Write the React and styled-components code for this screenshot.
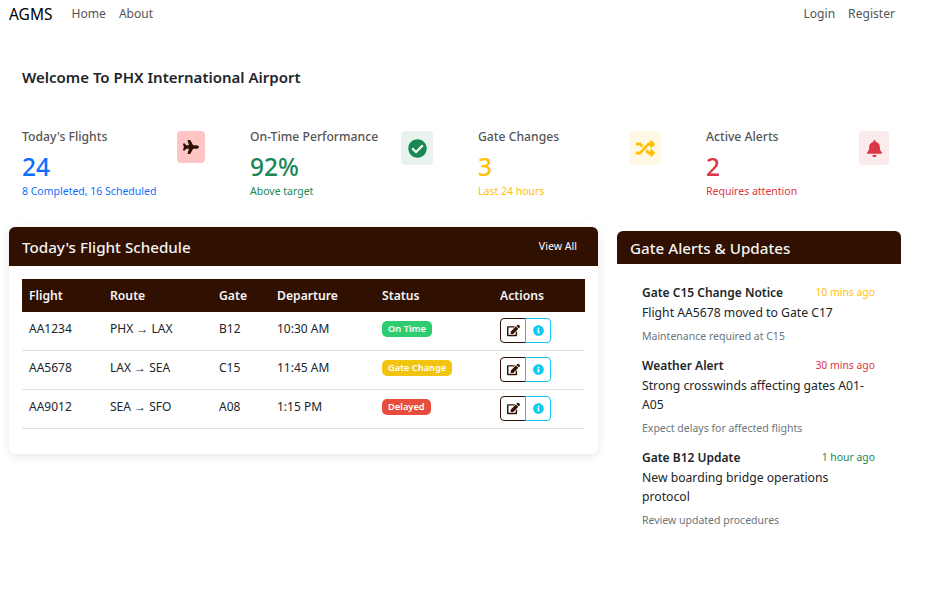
import React from "react";
import styled, { createGlobalStyle } from "styled-components";
import { FaPlane, FaCheckCircle, FaRandom, FaBell, FaEdit, FaInfoCircle } from "react-icons/fa";

const BROWN = "#301000";

const Global = createGlobalStyle`
  * {
    box-sizing: border-box;
  }
  body {
    margin: 0;
    background: #fff;
    color: #212529;
    font-family: "Noto Sans", "Open Sans", sans-serif;
    font-size: 12.5px;
  }
`;

const Navbar = styled.nav`
  height: 27px;
  display: flex;
  align-items: center;
  padding: 0 50px 0 9px;
`;

const Brand = styled.div`
  font-size: 15.5px;
  color: #000;
  margin-right: 19px;
`;

const NavLinks = styled.div`
  display: flex;
  gap: 13px;
  margin-left: ${(p) => (p.$right ? "auto" : "0")};
`;

const NavLink = styled.a`
  color: #555;
  font-size: 12.1px;
`;

const Welcome = styled.h1`
  margin: 38px 0 38px 22px;
  font-size: 15px;
  line-height: 24px;
  font-weight: 600;
  color: #212529;
`;

const Stats = styled.section`
  display: grid;
  grid-template-columns: repeat(4, 183px);
  gap: 45px;
  padding: 0 22px;
  margin-bottom: 28px;
`;

const Stat = styled.div`
  display: flex;
  justify-content: space-between;
  align-items: flex-start;
`;

const StatLabel = styled.div`
  font-size: 12.2px;
  line-height: 19px;
  font-weight: 500;
  color: #555;
  white-space: nowrap;
`;

const StatValue = styled.div`
  margin-top: 6px;
  font-size: 24.5px;
  line-height: 30px;
  font-weight: 500;
  color: ${(p) => p.$color};
`;

const StatNote = styled.div`
  margin-top: 1px;
  font-size: 10.5px;
  line-height: 16px;
  color: ${(p) => p.$color};
  white-space: nowrap;
`;

const IconBox = styled.div`
  margin-top: 4px;
  width: ${(p) => p.$w}px;
  height: ${(p) => p.$h}px;
  border-radius: 4px;
  background: ${(p) => p.$bg};
  color: ${(p) => p.$color};
  display: flex;
  align-items: center;
  justify-content: center;
  flex-shrink: 0;
`;

const Columns = styled.div`
  display: grid;
  grid-template-columns: 589px 284px;
  gap: 19px;
  padding: 0 0 0 9px;
  align-items: start;
`;

const ScheduleCard = styled.section`
  background: #fff;
  border-radius: 6px;
  box-shadow: 0 2px 10px rgba(0, 0, 0, 0.1);
`;

const CardHead = styled.header`
  height: ${(p) => p.$h}px;
  background: ${BROWN};
  border-radius: 6px 6px 0 0;
  color: #f5f5f5;
  display: flex;
  align-items: center;
  justify-content: space-between;
  padding: 0 21px 0 13px;
`;

const CardTitle = styled.h2`
  margin: 0;
  font-size: 15.2px;
  font-weight: 500;
  color: #f3f3f3;
`;

const ViewAll = styled.a`
  font-size: 10.6px;
  color: #fff;
  margin-bottom: 2px;
`;

const TableWrap = styled.div`
  padding: 13px 13px 25px;
`;

const Table = styled.table`
  width: 563px;
  table-layout: fixed;
  border-collapse: separate;
  border-spacing: 0;
`;

const Th = styled.th`
  width: ${(p) => p.$w}px;
  height: 33px;
  padding: 0 7px;
  background: ${BROWN};
  color: #f5f5f5;
  font-size: 12.2px;
  font-weight: 600;
  text-align: left;
`;

const Td = styled.td`
  height: 39px;
  padding: ${(p) => p.$top ?? 7}px 7px 0;
  vertical-align: top;
  border-bottom: 1px solid #dee2e6;
  font-size: 12px;
  line-height: 19px;
  color: #212529;
  white-space: nowrap;
`;

const Badge = styled.span`
  display: inline-block;
  padding: 0 6px;
  height: 16px;
  line-height: 16px;
  border-radius: 5px;
  font-size: 9.3px;
  font-weight: 600;
  color: #fff;
  background: ${(p) => p.$bg};
  vertical-align: top;
`;

const BtnGroup = styled.div`
  display: flex;
  width: 51px;
`;

const ActionBtn = styled.button`
  width: 26px;
  height: 25px;
  padding: 0;
  background: #fff;
  display: flex;
  align-items: center;
  justify-content: center;
  border: 1px solid ${(p) => (p.$info ? "#0dcaf0" : BROWN)};
  color: ${(p) => (p.$info ? "#0dcaf0" : BROWN)};
  border-radius: ${(p) => (p.$info ? "0 4px 4px 0" : "4px 0 0 4px")};
  margin-left: ${(p) => (p.$info ? "-1px" : "0")};
`;

const AlertsCard = styled.section`
  margin-top: 4px;
`;

const AlertList = styled.div`
  padding: 18px 26px 0 25px;
`;

const Alert = styled.article`
  padding-bottom: 11px;
`;

const AlertTop = styled.div`
  display: flex;
  justify-content: space-between;
  align-items: center;
  height: 20px;
  margin-bottom: 1px;
`;

const AlertTitle = styled.div`
  font-size: 12px;
  font-weight: 600;
  color: #212529;
`;

const AlertTime = styled.div`
  font-size: 10.4px;
  color: ${(p) => p.$color};
`;

const AlertBody = styled.div`
  font-size: 12.2px;
  line-height: 19px;
  color: #212529;
`;

const AlertNote = styled.div`
  margin-top: 6px;
  font-size: 10.5px;
  line-height: 16px;
  color: #6c757d;
`;

const stats = [
  { label: "Today's Flights", value: "24", note: "8 Completed, 16 Scheduled", color: "#0d6efd", icon: <FaPlane size={16} />, iconColor: BROWN, bg: "#ffc5c5", w: 28, h: 32 },
  { label: "On-Time Performance", value: "92%", note: "Above target", color: "#198754", icon: <FaCheckCircle size={19} />, iconColor: "#198754", bg: "#e8f3ee", w: 32, h: 34 },
  { label: "Gate Changes", value: "3", note: "Last 24 hours", color: "#ffc107", icon: <FaRandom size={19} />, iconColor: "#ffc107", bg: "#fff8e6", w: 32, h: 34 },
  { label: "Active Alerts", value: "2", note: "Requires attention", color: "#dc3545", icon: <FaBell size={17} />, iconColor: "#dc3545", bg: "#fbebec", w: 30, h: 34 },
];

const flights = [
  { id: "AA1234", route: "PHX → LAX", gate: "B12", time: "10:30 AM", status: "On Time", bg: "#2ecc71" },
  { id: "AA5678", route: "LAX → SEA", gate: "C15", time: "11:45 AM", status: "Gate Change", bg: "#f1c40f" },
  { id: "AA9012", route: "SEA → SFO", gate: "A08", time: "1:15 PM", status: "Delayed", bg: "#e74c3c" },
];

const alerts = [
  { title: "Gate C15 Change Notice", time: "10 mins ago", color: "#ffc107", body: "Flight AA5678 moved to Gate C17", note: "Maintenance required at C15" },
  { title: "Weather Alert", time: "30 mins ago", color: "#dc3545", body: "Strong crosswinds affecting gates A01-A05", note: "Expect delays for affected flights" },
  { title: "Gate B12 Update", time: "1 hour ago", color: "#198754", body: "New boarding bridge operations protocol", note: "Review updated procedures" },
];

export default function App() {
  return (
    <>
      <Global />
      <Navbar>
        <Brand>AGMS</Brand>
        <NavLinks>
          <NavLink>Home</NavLink>
          <NavLink>About</NavLink>
        </NavLinks>
        <NavLinks $right>
          <NavLink>Login</NavLink>
          <NavLink>Register</NavLink>
        </NavLinks>
      </Navbar>

      <Welcome>Welcome To PHX International Airport</Welcome>

      <Stats>
        {stats.map((s) => (
          <Stat key={s.label}>
            <div>
              <StatLabel>{s.label}</StatLabel>
              <StatValue $color={s.color}>{s.value}</StatValue>
              <StatNote $color={s.color}>{s.note}</StatNote>
            </div>
            <IconBox $w={s.w} $h={s.h} $bg={s.bg} $color={s.iconColor}>
              {s.icon}
            </IconBox>
          </Stat>
        ))}
      </Stats>

      <Columns>
        <ScheduleCard>
          <CardHead $h={39}>
            <CardTitle>Today's Flight Schedule</CardTitle>
            <ViewAll>View All</ViewAll>
          </CardHead>
          <TableWrap>
            <Table>
              <thead>
                <tr>
                  <Th $w={81}>Flight</Th>
                  <Th $w={109}>Route</Th>
                  <Th $w={58}>Gate</Th>
                  <Th $w={105}>Departure</Th>
                  <Th $w={118}>Status</Th>
                  <Th $w={92}>Actions</Th>
                </tr>
              </thead>
              <tbody>
                {flights.map((f) => (
                  <tr key={f.id}>
                    <Td>{f.id}</Td>
                    <Td>{f.route}</Td>
                    <Td>{f.gate}</Td>
                    <Td>{f.time}</Td>
                    <Td $top={9}>
                      <Badge $bg={f.bg}>{f.status}</Badge>
                    </Td>
                    <Td $top={6}>
                      <BtnGroup>
                        <ActionBtn>
                          <FaEdit size={13} />
                        </ActionBtn>
                        <ActionBtn $info>
                          <FaInfoCircle size={11} />
                        </ActionBtn>
                      </BtnGroup>
                    </Td>
                  </tr>
                ))}
              </tbody>
            </Table>
          </TableWrap>
        </ScheduleCard>

        <AlertsCard>
          <CardHead $h={33}>
            <CardTitle>Gate Alerts &amp; Updates</CardTitle>
          </CardHead>
          <AlertList>
            {alerts.map((a) => (
              <Alert key={a.title}>
                <AlertTop>
                  <AlertTitle>{a.title}</AlertTitle>
                  <AlertTime $color={a.color}>{a.time}</AlertTime>
                </AlertTop>
                <AlertBody>{a.body}</AlertBody>
                <AlertNote>{a.note}</AlertNote>
              </Alert>
            ))}
          </AlertList>
        </AlertsCard>
      </Columns>
    </>
  );
}
